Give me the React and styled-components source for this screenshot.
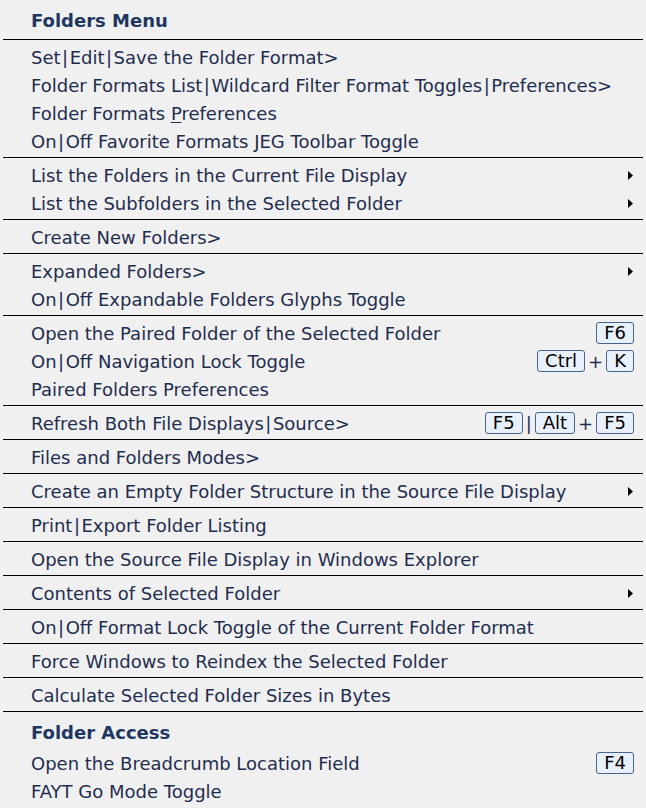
import React from 'react';
import styled, { createGlobalStyle } from 'styled-components';

const GlobalStyle = createGlobalStyle`
  html, body {
    margin: 0;
    padding: 0;
    background: #f0f0f0;
  }
  body {
    font-family: "DejaVu Sans", Verdana, sans-serif;
    font-size: 18px;
    color: #1e2d4e;
  }
`;

const Menu = styled.div`
  width: 640px;
  padding: 0 3px;
`;

const Section = styled.div`
  border-top: ${(p) => (p.$first ? 'none' : '1px solid #000')};
  padding: 3px 0 2px;
`;

const Heading = styled.div`
  height: 34px;
  display: flex;
  align-items: center;
  padding-left: 28px;
  font-weight: bold;
  color: #1f3760;
`;

const Row = styled.div`
  height: 28px;
  display: flex;
  align-items: center;
  justify-content: space-between;
  padding: 0 9px 0 28px;
  white-space: nowrap;
`;

const Label = styled.span`
  u {
    text-decoration: underline;
    text-underline-offset: 2px;
  }
`;

const Pipe = styled.span`
  margin: 0 1.5px;
`;

const Keys = styled.span`
  display: flex;
  align-items: center;
  gap: 3px;
  font-size: 18px;
  color: #000;
`;

const Key = styled.span`
  display: inline-flex;
  align-items: center;
  justify-content: center;
  height: 20px;
  padding: 0 7px;
  box-sizing: content-box;
  border: 1px solid #45658c;
  border-radius: 3px;
  background: #e8f0fb;
  color: #000;
  line-height: 1;
`;

const Sep = styled.span`
  color: #1e2d4e;
  font-size: 18px;
`;

const Arrow = styled.svg`
  width: 5px;
  height: 9px;
  margin-right: 1px;
`;

const SubArrow = () => (
  <Arrow viewBox="0 0 5 9">
    <path d="M0 0 L5 4.5 L0 9 Z" fill="#000" />
  </Arrow>
);

// wider pipes, like the original menu font
const withPipes = (text) =>
  typeof text === 'string'
    ? text.split('|').flatMap((part, i) => (i === 0 ? [part] : [<Pipe key={i}>|</Pipe>, part]))
    : text;

const Item = ({ children, sub, keys }) => (
  <Row>
    <Label>{withPipes(children)}</Label>
    {sub && <SubArrow />}
    {keys && <Keys>{keys}</Keys>}
  </Row>
);

export default function App() {
  return (
    <>
      <GlobalStyle />
      <Menu>
        <Section $first>
          <Heading>Folders Menu</Heading>
        </Section>
        <Section>
          <Item>Set|Edit|Save the Folder Format&gt;</Item>
          <Item>Folder Formats List|Wildcard Filter Format Toggles|Preferences&gt;</Item>
          <Item>
            <>
              Folder Formats <u>P</u>references
            </>
          </Item>
          <Item>On|Off Favorite Formats JEG Toolbar Toggle</Item>
        </Section>
        <Section>
          <Item sub>List the Folders in the Current File Display</Item>
          <Item sub>List the Subfolders in the Selected Folder</Item>
        </Section>
        <Section>
          <Item>Create New Folders&gt;</Item>
        </Section>
        <Section>
          <Item sub>Expanded Folders&gt;</Item>
          <Item>On|Off Expandable Folders Glyphs Toggle</Item>
        </Section>
        <Section>
          <Item keys={<Key>F6</Key>}>Open the Paired Folder of the Selected Folder</Item>
          <Item
            keys={
              <>
                <Key>Ctrl</Key>
                <Sep>+</Sep>
                <Key>K</Key>
              </>
            }
          >
            On|Off Navigation Lock Toggle
          </Item>
          <Item>Paired Folders Preferences</Item>
        </Section>
        <Section>
          <Item
            keys={
              <>
                <Key>F5</Key>
                <Sep>|</Sep>
                <Key>Alt</Key>
                <Sep>+</Sep>
                <Key>F5</Key>
              </>
            }
          >
            Refresh Both File Displays|Source&gt;
          </Item>
        </Section>
        <Section>
          <Item>Files and Folders Modes&gt;</Item>
        </Section>
        <Section>
          <Item sub>Create an Empty Folder Structure in the Source File Display</Item>
        </Section>
        <Section>
          <Item>Print|Export Folder Listing</Item>
        </Section>
        <Section>
          <Item>Open the Source File Display in Windows Explorer</Item>
        </Section>
        <Section>
          <Item sub>Contents of Selected Folder</Item>
        </Section>
        <Section>
          <Item>On|Off Format Lock Toggle of the Current Folder Format</Item>
        </Section>
        <Section>
          <Item>Force Windows to Reindex the Selected Folder</Item>
        </Section>
        <Section>
          <Item>Calculate Selected Folder Sizes in Bytes</Item>
        </Section>
        <Section>
          <Heading>Folder Access</Heading>
          <Item keys={<Key>F4</Key>}>Open the Breadcrumb Location Field</Item>
          <Item>FAYT Go Mode Toggle</Item>
        </Section>
      </Menu>
    </>
  );
}
